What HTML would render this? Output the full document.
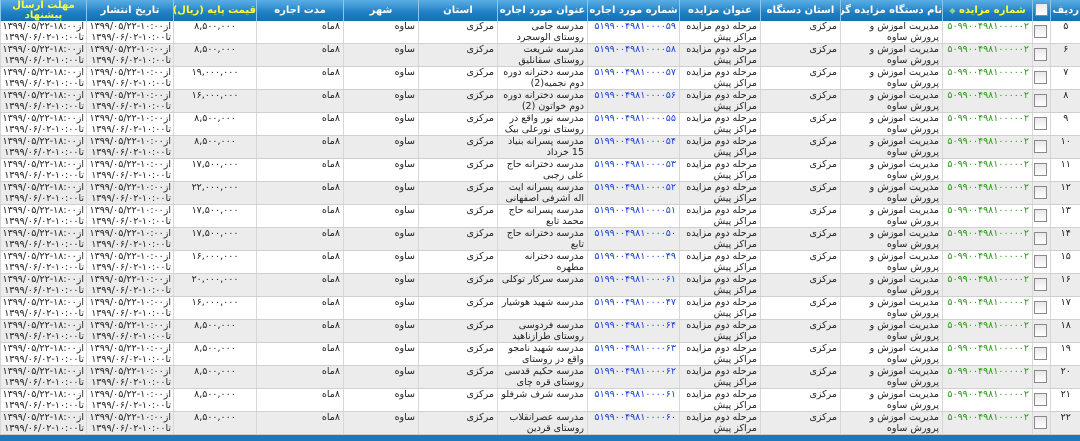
<!DOCTYPE html>
<html><head><meta charset="utf-8">
<style>
body{margin:0;width:1080px;height:441px;overflow:hidden;background:#fff;font-family:"DejaVu Sans","Noto Sans CJK SC",sans-serif;}
table{border-collapse:collapse;table-layout:fixed;width:1080px;direction:rtl;}
th{height:21px;padding:0;background:linear-gradient(#5aaee4,#1f7fc4 60%,#1570b2);color:#fff;font-size:10px;font-weight:bold;border-left:1px solid #8cc6ec;text-align:center;vertical-align:middle;line-height:10px;overflow:hidden;white-space:nowrap}
th.w{white-space:normal}
th.y{color:#ffff33}
td{padding:0;height:22px;border-bottom:1px solid #d0d0d0;border-left:1px solid #d8d8d8;vertical-align:top;font-size:9.5px;color:#222;overflow:hidden}
td div{height:22px;overflow:hidden;line-height:11px;padding:0 3px;text-align:right;white-space:normal}
td div.d{white-space:nowrap;padding:0 2px}
tr:nth-child(odd) td{background:#ececec}
td.c div{text-align:center}
.g{color:#2a9a18}.b{color:#1a3fd6}
.cb{display:inline-block;width:11px;height:11px;border:1px solid #8a8a8a;background:linear-gradient(#e8e8e8,#fff);margin-top:4px}
.foot{position:absolute;left:0;top:435px;width:1080px;height:6px;background:#1b78bd}
.sort{color:#8fd08f;font-size:8px}
</style></head><body>
<table>
<colgroup><col style="width:30px"><col style="width:18px"><col style="width:90px"><col style="width:102px"><col style="width:80px"><col style="width:81px"><col style="width:92px"><col style="width:90px"><col style="width:79px"><col style="width:75px"><col style="width:87px"><col style="width:83px"><col style="width:87px"><col style="width:86px"></colgroup>
<tr><th>ردیف</th><th><span class="cb" style="margin-top:0"></span></th><th class="y">شماره مزایده <span class="sort">◆</span></th><th>نام دستگاه مزایده گزار</th><th>استان دستگاه</th><th>عنوان مزایده</th><th>شماره مورد اجاره</th><th>عنوان مورد اجاره</th><th>استان</th><th>شهر</th><th>مدت اجاره</th><th class="y">قیمت پایه (ریال)<span class="sort">◆</span></th><th>تاریخ انتشار</th><th class="y w">مهلت ارسال پیشنهاد</th></tr>
<tr><td class="c"><div>۵</div></td><td class="c"><div><span class="cb"></span></div></td><td><div class="g">۵۰۹۹۰۰۴۹۸۱۰۰۰۰۰۲</div></td><td><div>مدیریت آموزش و پرورش ساوه</div></td><td><div>مرکزی</div></td><td><div>مرحله دوم مزایده مراکز پیش دبستانی</div></td><td><div class="b">۵۱۹۹۰۰۴۹۸۱۰۰۰۰۵۹</div></td><td><div>مدرسه جامی روستای الوسجرد</div></td><td><div>مرکزی</div></td><td><div>ساوه</div></td><td><div>۸ماه</div></td><td class="c"><div>۸,۵۰۰,۰۰۰</div></td><td><div class="d">از<bdo dir="ltr">۱۳۹۹/۰۵/۲۲-۱۰:۰۰</bdo><br>تا<bdo dir="ltr">۱۳۹۹/۰۶/۰۲-۱۰:۰۰</bdo></div></td><td><div class="d">از<bdo dir="ltr">۱۳۹۹/۰۵/۲۲-۱۸:۰۰</bdo><br>تا<bdo dir="ltr">۱۳۹۹/۰۶/۰۲-۱۰:۰۰</bdo></div></td></tr>
<tr><td class="c"><div>۶</div></td><td class="c"><div><span class="cb"></span></div></td><td><div class="g">۵۰۹۹۰۰۴۹۸۱۰۰۰۰۰۲</div></td><td><div>مدیریت آموزش و پرورش ساوه</div></td><td><div>مرکزی</div></td><td><div>مرحله دوم مزایده مراکز پیش دبستانی</div></td><td><div class="b">۵۱۹۹۰۰۴۹۸۱۰۰۰۰۵۸</div></td><td><div>مدرسه شریعت روستای سقانلیق</div></td><td><div>مرکزی</div></td><td><div>ساوه</div></td><td><div>۸ماه</div></td><td class="c"><div>۸,۵۰۰,۰۰۰</div></td><td><div class="d">از<bdo dir="ltr">۱۳۹۹/۰۵/۲۲-۱۰:۰۰</bdo><br>تا<bdo dir="ltr">۱۳۹۹/۰۶/۰۲-۱۰:۰۰</bdo></div></td><td><div class="d">از<bdo dir="ltr">۱۳۹۹/۰۵/۲۲-۱۸:۰۰</bdo><br>تا<bdo dir="ltr">۱۳۹۹/۰۶/۰۲-۱۰:۰۰</bdo></div></td></tr>
<tr><td class="c"><div>۷</div></td><td class="c"><div><span class="cb"></span></div></td><td><div class="g">۵۰۹۹۰۰۴۹۸۱۰۰۰۰۰۲</div></td><td><div>مدیریت آموزش و پرورش ساوه</div></td><td><div>مرکزی</div></td><td><div>مرحله دوم مزایده مراکز پیش دبستانی</div></td><td><div class="b">۵۱۹۹۰۰۴۹۸۱۰۰۰۰۵۷</div></td><td><div>مدرسه دخترانه دوره دوم نجمیه(2)</div></td><td><div>مرکزی</div></td><td><div>ساوه</div></td><td><div>۸ماه</div></td><td class="c"><div>۱۹,۰۰۰,۰۰۰</div></td><td><div class="d">از<bdo dir="ltr">۱۳۹۹/۰۵/۲۲-۱۰:۰۰</bdo><br>تا<bdo dir="ltr">۱۳۹۹/۰۶/۰۲-۱۰:۰۰</bdo></div></td><td><div class="d">از<bdo dir="ltr">۱۳۹۹/۰۵/۲۲-۱۸:۰۰</bdo><br>تا<bdo dir="ltr">۱۳۹۹/۰۶/۰۲-۱۰:۰۰</bdo></div></td></tr>
<tr><td class="c"><div>۸</div></td><td class="c"><div><span class="cb"></span></div></td><td><div class="g">۵۰۹۹۰۰۴۹۸۱۰۰۰۰۰۲</div></td><td><div>مدیریت آموزش و پرورش ساوه</div></td><td><div>مرکزی</div></td><td><div>مرحله دوم مزایده مراکز پیش دبستانی</div></td><td><div class="b">۵۱۹۹۰۰۴۹۸۱۰۰۰۰۵۶</div></td><td><div>مدرسه دخترانه دوره دوم خواتون (2)</div></td><td><div>مرکزی</div></td><td><div>ساوه</div></td><td><div>۸ماه</div></td><td class="c"><div>۱۶,۰۰۰,۰۰۰</div></td><td><div class="d">از<bdo dir="ltr">۱۳۹۹/۰۵/۲۲-۱۰:۰۰</bdo><br>تا<bdo dir="ltr">۱۳۹۹/۰۶/۰۲-۱۰:۰۰</bdo></div></td><td><div class="d">از<bdo dir="ltr">۱۳۹۹/۰۵/۲۲-۱۸:۰۰</bdo><br>تا<bdo dir="ltr">۱۳۹۹/۰۶/۰۲-۱۰:۰۰</bdo></div></td></tr>
<tr><td class="c"><div>۹</div></td><td class="c"><div><span class="cb"></span></div></td><td><div class="g">۵۰۹۹۰۰۴۹۸۱۰۰۰۰۰۲</div></td><td><div>مدیریت آموزش و پرورش ساوه</div></td><td><div>مرکزی</div></td><td><div>مرحله دوم مزایده مراکز پیش دبستانی</div></td><td><div class="b">۵۱۹۹۰۰۴۹۸۱۰۰۰۰۵۵</div></td><td><div>مدرسه نور واقع در روستای نورعلی بیک</div></td><td><div>مرکزی</div></td><td><div>ساوه</div></td><td><div>۸ماه</div></td><td class="c"><div>۸,۵۰۰,۰۰۰</div></td><td><div class="d">از<bdo dir="ltr">۱۳۹۹/۰۵/۲۲-۱۰:۰۰</bdo><br>تا<bdo dir="ltr">۱۳۹۹/۰۶/۰۲-۱۰:۰۰</bdo></div></td><td><div class="d">از<bdo dir="ltr">۱۳۹۹/۰۵/۲۲-۱۸:۰۰</bdo><br>تا<bdo dir="ltr">۱۳۹۹/۰۶/۰۲-۱۰:۰۰</bdo></div></td></tr>
<tr><td class="c"><div>۱۰</div></td><td class="c"><div><span class="cb"></span></div></td><td><div class="g">۵۰۹۹۰۰۴۹۸۱۰۰۰۰۰۲</div></td><td><div>مدیریت آموزش و پرورش ساوه</div></td><td><div>مرکزی</div></td><td><div>مرحله دوم مزایده مراکز پیش دبستانی</div></td><td><div class="b">۵۱۹۹۰۰۴۹۸۱۰۰۰۰۵۴</div></td><td><div>مدرسه پسرانه بنیاد 15 خرداد</div></td><td><div>مرکزی</div></td><td><div>ساوه</div></td><td><div>۸ماه</div></td><td class="c"><div>۸,۵۰۰,۰۰۰</div></td><td><div class="d">از<bdo dir="ltr">۱۳۹۹/۰۵/۲۲-۱۰:۰۰</bdo><br>تا<bdo dir="ltr">۱۳۹۹/۰۶/۰۲-۱۰:۰۰</bdo></div></td><td><div class="d">از<bdo dir="ltr">۱۳۹۹/۰۵/۲۲-۱۸:۰۰</bdo><br>تا<bdo dir="ltr">۱۳۹۹/۰۶/۰۲-۱۰:۰۰</bdo></div></td></tr>
<tr><td class="c"><div>۱۱</div></td><td class="c"><div><span class="cb"></span></div></td><td><div class="g">۵۰۹۹۰۰۴۹۸۱۰۰۰۰۰۲</div></td><td><div>مدیریت آموزش و پرورش ساوه</div></td><td><div>مرکزی</div></td><td><div>مرحله دوم مزایده مراکز پیش دبستانی</div></td><td><div class="b">۵۱۹۹۰۰۴۹۸۱۰۰۰۰۵۳</div></td><td><div>مدرسه دخترانه حاج علی رجبی</div></td><td><div>مرکزی</div></td><td><div>ساوه</div></td><td><div>۸ماه</div></td><td class="c"><div>۱۷,۵۰۰,۰۰۰</div></td><td><div class="d">از<bdo dir="ltr">۱۳۹۹/۰۵/۲۲-۱۰:۰۰</bdo><br>تا<bdo dir="ltr">۱۳۹۹/۰۶/۰۲-۱۰:۰۰</bdo></div></td><td><div class="d">از<bdo dir="ltr">۱۳۹۹/۰۵/۲۲-۱۸:۰۰</bdo><br>تا<bdo dir="ltr">۱۳۹۹/۰۶/۰۲-۱۰:۰۰</bdo></div></td></tr>
<tr><td class="c"><div>۱۲</div></td><td class="c"><div><span class="cb"></span></div></td><td><div class="g">۵۰۹۹۰۰۴۹۸۱۰۰۰۰۰۲</div></td><td><div>مدیریت آموزش و پرورش ساوه</div></td><td><div>مرکزی</div></td><td><div>مرحله دوم مزایده مراکز پیش دبستانی</div></td><td><div class="b">۵۱۹۹۰۰۴۹۸۱۰۰۰۰۵۲</div></td><td><div>مدرسه پسرانه آیت اله اشرفی اصفهانی</div></td><td><div>مرکزی</div></td><td><div>ساوه</div></td><td><div>۸ماه</div></td><td class="c"><div>۲۲,۰۰۰,۰۰۰</div></td><td><div class="d">از<bdo dir="ltr">۱۳۹۹/۰۵/۲۲-۱۰:۰۰</bdo><br>تا<bdo dir="ltr">۱۳۹۹/۰۶/۰۲-۱۰:۰۰</bdo></div></td><td><div class="d">از<bdo dir="ltr">۱۳۹۹/۰۵/۲۲-۱۸:۰۰</bdo><br>تا<bdo dir="ltr">۱۳۹۹/۰۶/۰۲-۱۰:۰۰</bdo></div></td></tr>
<tr><td class="c"><div>۱۳</div></td><td class="c"><div><span class="cb"></span></div></td><td><div class="g">۵۰۹۹۰۰۴۹۸۱۰۰۰۰۰۲</div></td><td><div>مدیریت آموزش و پرورش ساوه</div></td><td><div>مرکزی</div></td><td><div>مرحله دوم مزایده مراکز پیش دبستانی</div></td><td><div class="b">۵۱۹۹۰۰۴۹۸۱۰۰۰۰۵۱</div></td><td><div>مدرسه پسرانه حاج محمد تابع</div></td><td><div>مرکزی</div></td><td><div>ساوه</div></td><td><div>۸ماه</div></td><td class="c"><div>۱۷,۵۰۰,۰۰۰</div></td><td><div class="d">از<bdo dir="ltr">۱۳۹۹/۰۵/۲۲-۱۰:۰۰</bdo><br>تا<bdo dir="ltr">۱۳۹۹/۰۶/۰۲-۱۰:۰۰</bdo></div></td><td><div class="d">از<bdo dir="ltr">۱۳۹۹/۰۵/۲۲-۱۸:۰۰</bdo><br>تا<bdo dir="ltr">۱۳۹۹/۰۶/۰۲-۱۰:۰۰</bdo></div></td></tr>
<tr><td class="c"><div>۱۴</div></td><td class="c"><div><span class="cb"></span></div></td><td><div class="g">۵۰۹۹۰۰۴۹۸۱۰۰۰۰۰۲</div></td><td><div>مدیریت آموزش و پرورش ساوه</div></td><td><div>مرکزی</div></td><td><div>مرحله دوم مزایده مراکز پیش دبستانی</div></td><td><div class="b">۵۱۹۹۰۰۴۹۸۱۰۰۰۰۵۰</div></td><td><div>مدرسه دخترانه حاج تابع</div></td><td><div>مرکزی</div></td><td><div>ساوه</div></td><td><div>۸ماه</div></td><td class="c"><div>۱۷,۵۰۰,۰۰۰</div></td><td><div class="d">از<bdo dir="ltr">۱۳۹۹/۰۵/۲۲-۱۰:۰۰</bdo><br>تا<bdo dir="ltr">۱۳۹۹/۰۶/۰۲-۱۰:۰۰</bdo></div></td><td><div class="d">از<bdo dir="ltr">۱۳۹۹/۰۵/۲۲-۱۸:۰۰</bdo><br>تا<bdo dir="ltr">۱۳۹۹/۰۶/۰۲-۱۰:۰۰</bdo></div></td></tr>
<tr><td class="c"><div>۱۵</div></td><td class="c"><div><span class="cb"></span></div></td><td><div class="g">۵۰۹۹۰۰۴۹۸۱۰۰۰۰۰۲</div></td><td><div>مدیریت آموزش و پرورش ساوه</div></td><td><div>مرکزی</div></td><td><div>مرحله دوم مزایده مراکز پیش دبستانی</div></td><td><div class="b">۵۱۹۹۰۰۴۹۸۱۰۰۰۰۴۹</div></td><td><div>مدرسه دخترانه مطهره</div></td><td><div>مرکزی</div></td><td><div>ساوه</div></td><td><div>۸ماه</div></td><td class="c"><div>۱۶,۰۰۰,۰۰۰</div></td><td><div class="d">از<bdo dir="ltr">۱۳۹۹/۰۵/۲۲-۱۰:۰۰</bdo><br>تا<bdo dir="ltr">۱۳۹۹/۰۶/۰۲-۱۰:۰۰</bdo></div></td><td><div class="d">از<bdo dir="ltr">۱۳۹۹/۰۵/۲۲-۱۸:۰۰</bdo><br>تا<bdo dir="ltr">۱۳۹۹/۰۶/۰۲-۱۰:۰۰</bdo></div></td></tr>
<tr><td class="c"><div>۱۶</div></td><td class="c"><div><span class="cb"></span></div></td><td><div class="g">۵۰۹۹۰۰۴۹۸۱۰۰۰۰۰۲</div></td><td><div>مدیریت آموزش و پرورش ساوه</div></td><td><div>مرکزی</div></td><td><div>مرحله دوم مزایده مراکز پیش دبستانی</div></td><td><div class="b">۵۱۹۹۰۰۴۹۸۱۰۰۰۰۶۱</div></td><td><div>مدرسه سرکار توکلی</div></td><td><div>مرکزی</div></td><td><div>ساوه</div></td><td><div>۸ماه</div></td><td class="c"><div>۲۰,۰۰۰,۰۰۰</div></td><td><div class="d">از<bdo dir="ltr">۱۳۹۹/۰۵/۲۲-۱۰:۰۰</bdo><br>تا<bdo dir="ltr">۱۳۹۹/۰۶/۰۲-۱۰:۰۰</bdo></div></td><td><div class="d">از<bdo dir="ltr">۱۳۹۹/۰۵/۲۲-۱۸:۰۰</bdo><br>تا<bdo dir="ltr">۱۳۹۹/۰۶/۰۲-۱۰:۰۰</bdo></div></td></tr>
<tr><td class="c"><div>۱۷</div></td><td class="c"><div><span class="cb"></span></div></td><td><div class="g">۵۰۹۹۰۰۴۹۸۱۰۰۰۰۰۲</div></td><td><div>مدیریت آموزش و پرورش ساوه</div></td><td><div>مرکزی</div></td><td><div>مرحله دوم مزایده مراکز پیش دبستانی</div></td><td><div class="b">۵۱۹۹۰۰۴۹۸۱۰۰۰۰۴۷</div></td><td><div>مدرسه شهید هوشیار</div></td><td><div>مرکزی</div></td><td><div>ساوه</div></td><td><div>۸ماه</div></td><td class="c"><div>۱۶,۰۰۰,۰۰۰</div></td><td><div class="d">از<bdo dir="ltr">۱۳۹۹/۰۵/۲۲-۱۰:۰۰</bdo><br>تا<bdo dir="ltr">۱۳۹۹/۰۶/۰۲-۱۰:۰۰</bdo></div></td><td><div class="d">از<bdo dir="ltr">۱۳۹۹/۰۵/۲۲-۱۸:۰۰</bdo><br>تا<bdo dir="ltr">۱۳۹۹/۰۶/۰۲-۱۰:۰۰</bdo></div></td></tr>
<tr><td class="c"><div>۱۸</div></td><td class="c"><div><span class="cb"></span></div></td><td><div class="g">۵۰۹۹۰۰۴۹۸۱۰۰۰۰۰۲</div></td><td><div>مدیریت آموزش و پرورش ساوه</div></td><td><div>مرکزی</div></td><td><div>مرحله دوم مزایده مراکز پیش دبستانی</div></td><td><div class="b">۵۱۹۹۰۰۴۹۸۱۰۰۰۰۶۴</div></td><td><div>مدرسه فردوسی روستای طرازناهید</div></td><td><div>مرکزی</div></td><td><div>ساوه</div></td><td><div>۸ماه</div></td><td class="c"><div>۸,۵۰۰,۰۰۰</div></td><td><div class="d">از<bdo dir="ltr">۱۳۹۹/۰۵/۲۲-۱۰:۰۰</bdo><br>تا<bdo dir="ltr">۱۳۹۹/۰۶/۰۲-۱۰:۰۰</bdo></div></td><td><div class="d">از<bdo dir="ltr">۱۳۹۹/۰۵/۲۲-۱۸:۰۰</bdo><br>تا<bdo dir="ltr">۱۳۹۹/۰۶/۰۲-۱۰:۰۰</bdo></div></td></tr>
<tr><td class="c"><div>۱۹</div></td><td class="c"><div><span class="cb"></span></div></td><td><div class="g">۵۰۹۹۰۰۴۹۸۱۰۰۰۰۰۲</div></td><td><div>مدیریت آموزش و پرورش ساوه</div></td><td><div>مرکزی</div></td><td><div>مرحله دوم مزایده مراکز پیش دبستانی</div></td><td><div class="b">۵۱۹۹۰۰۴۹۸۱۰۰۰۰۶۳</div></td><td><div>مدرسه شهید نامجو واقع در روستای لالائین</div></td><td><div>مرکزی</div></td><td><div>ساوه</div></td><td><div>۸ماه</div></td><td class="c"><div>۸,۵۰۰,۰۰۰</div></td><td><div class="d">از<bdo dir="ltr">۱۳۹۹/۰۵/۲۲-۱۰:۰۰</bdo><br>تا<bdo dir="ltr">۱۳۹۹/۰۶/۰۲-۱۰:۰۰</bdo></div></td><td><div class="d">از<bdo dir="ltr">۱۳۹۹/۰۵/۲۲-۱۸:۰۰</bdo><br>تا<bdo dir="ltr">۱۳۹۹/۰۶/۰۲-۱۰:۰۰</bdo></div></td></tr>
<tr><td class="c"><div>۲۰</div></td><td class="c"><div><span class="cb"></span></div></td><td><div class="g">۵۰۹۹۰۰۴۹۸۱۰۰۰۰۰۲</div></td><td><div>مدیریت آموزش و پرورش ساوه</div></td><td><div>مرکزی</div></td><td><div>مرحله دوم مزایده مراکز پیش دبستانی</div></td><td><div class="b">۵۱۹۹۰۰۴۹۸۱۰۰۰۰۶۲</div></td><td><div>مدرسه حکیم قدسی روستای قره چای</div></td><td><div>مرکزی</div></td><td><div>ساوه</div></td><td><div>۸ماه</div></td><td class="c"><div>۸,۵۰۰,۰۰۰</div></td><td><div class="d">از<bdo dir="ltr">۱۳۹۹/۰۵/۲۲-۱۰:۰۰</bdo><br>تا<bdo dir="ltr">۱۳۹۹/۰۶/۰۲-۱۰:۰۰</bdo></div></td><td><div class="d">از<bdo dir="ltr">۱۳۹۹/۰۵/۲۲-۱۸:۰۰</bdo><br>تا<bdo dir="ltr">۱۳۹۹/۰۶/۰۲-۱۰:۰۰</bdo></div></td></tr>
<tr><td class="c"><div>۲۱</div></td><td class="c"><div><span class="cb"></span></div></td><td><div class="g">۵۰۹۹۰۰۴۹۸۱۰۰۰۰۰۲</div></td><td><div>مدیریت آموزش و پرورش ساوه</div></td><td><div>مرکزی</div></td><td><div>مرحله دوم مزایده مراکز پیش دبستانی</div></td><td><div class="b">۵۱۹۹۰۰۴۹۸۱۰۰۰۰۶۱</div></td><td><div>مدرسه شرف شرفلو</div></td><td><div>مرکزی</div></td><td><div>ساوه</div></td><td><div>۸ماه</div></td><td class="c"><div>۸,۵۰۰,۰۰۰</div></td><td><div class="d">از<bdo dir="ltr">۱۳۹۹/۰۵/۲۲-۱۰:۰۰</bdo><br>تا<bdo dir="ltr">۱۳۹۹/۰۶/۰۲-۱۰:۰۰</bdo></div></td><td><div class="d">از<bdo dir="ltr">۱۳۹۹/۰۵/۲۲-۱۸:۰۰</bdo><br>تا<bdo dir="ltr">۱۳۹۹/۰۶/۰۲-۱۰:۰۰</bdo></div></td></tr>
<tr><td class="c"><div>۲۲</div></td><td class="c"><div><span class="cb"></span></div></td><td><div class="g">۵۰۹۹۰۰۴۹۸۱۰۰۰۰۰۲</div></td><td><div>مدیریت آموزش و پرورش ساوه</div></td><td><div>مرکزی</div></td><td><div>مرحله دوم مزایده مراکز پیش دبستانی</div></td><td><div class="b">۵۱۹۹۰۰۴۹۸۱۰۰۰۰۶۰</div></td><td><div>مدرسه عصرانقلاب روستای قردین</div></td><td><div>مرکزی</div></td><td><div>ساوه</div></td><td><div>۸ماه</div></td><td class="c"><div>۸,۵۰۰,۰۰۰</div></td><td><div class="d">از<bdo dir="ltr">۱۳۹۹/۰۵/۲۲-۱۰:۰۰</bdo><br>تا<bdo dir="ltr">۱۳۹۹/۰۶/۰۲-۱۰:۰۰</bdo></div></td><td><div class="d">از<bdo dir="ltr">۱۳۹۹/۰۵/۲۲-۱۸:۰۰</bdo><br>تا<bdo dir="ltr">۱۳۹۹/۰۶/۰۲-۱۰:۰۰</bdo></div></td></tr>
</table>
<div class="foot"></div>
</body></html>
